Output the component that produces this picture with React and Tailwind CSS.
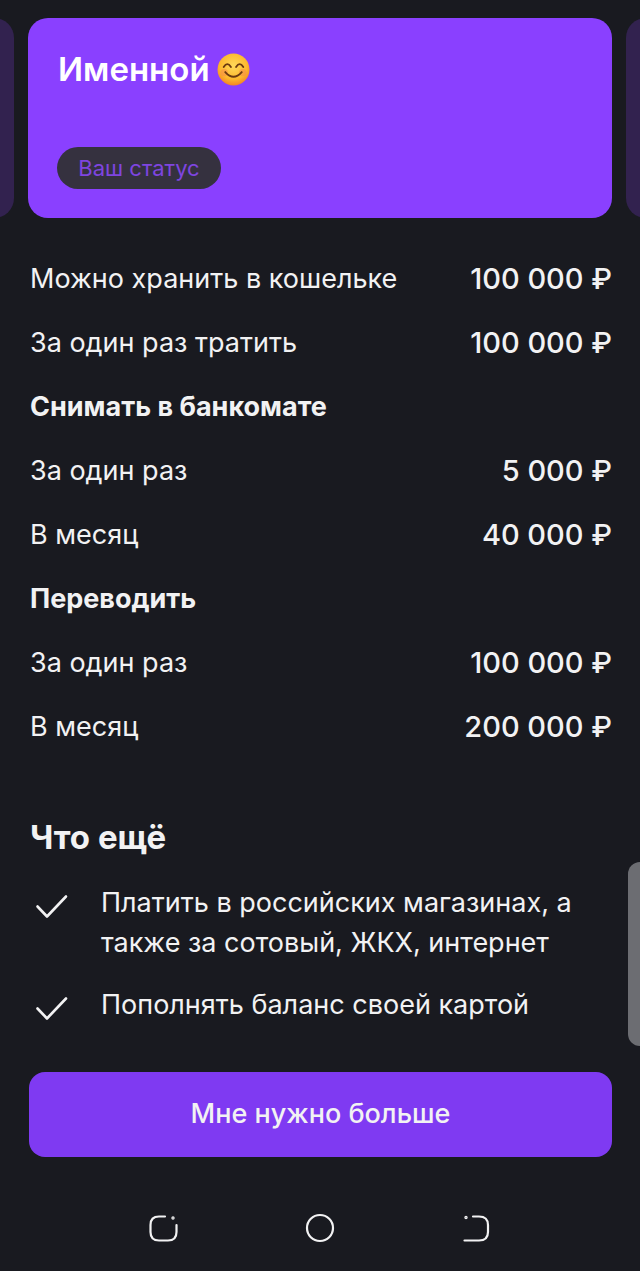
import React from 'react';

const limits = [
    { label: 'Можно хранить в кошельке', value: '100 000 ₽' },
    { label: 'За один раз тратить', value: '100 000 ₽' },
    { label: 'Снимать в банкомате', heading: true },
    { label: 'За один раз', value: '5 000 ₽' },
    { label: 'В месяц', value: '40 000 ₽' },
    { label: 'Переводить', heading: true },
    { label: 'За один раз', value: '100 000 ₽' },
    { label: 'В месяц', value: '200 000 ₽' },
];

const Check = () => (
    <svg width="34" height="26" viewBox="0 0 34 26" fill="none" className="shrink-0">
        <path d="M2.5 13.5 L12 23.5 L31 3.5" stroke="#f2f2f3" strokeWidth="2.6" strokeLinecap="round" strokeLinejoin="round" />
    </svg>
);

const Smile = () => (
    <svg width="33" height="33" viewBox="0 0 32 32">
        <defs>
            <radialGradient id="face" cx="50%" cy="38%" r="65%">
                <stop offset="0%" stopColor="#ffd95a" />
                <stop offset="65%" stopColor="#fdb92e" />
                <stop offset="100%" stopColor="#f27c22" />
            </radialGradient>
        </defs>
        <circle cx="16" cy="16" r="15.5" fill="url(#face)" />
        <circle cx="7" cy="19" r="3.6" fill="#f58a4b" opacity="0.55" />
        <circle cx="25" cy="19" r="3.6" fill="#f58a4b" opacity="0.55" />
        <path d="M6.5 13.5 Q10 8 13.5 13.5 M18.5 13.5 Q22 8 25.5 13.5" stroke="#6b3a10" strokeWidth="1.8" fill="none" strokeLinecap="round" />
        <path d="M8 18.5 Q16 27.5 24 18.5" stroke="#6b3a10" strokeWidth="1.8" fill="none" strokeLinecap="round" />
    </svg>
);

export default function App() {
    return (
        <div className="relative w-[640px] h-[1271px] overflow-hidden bg-[#191a20] text-[#f2f2f3] font-['Inter','Noto_Sans',sans-serif]">
            {/* Status cards */}
            <div className="flex gap-[14px] pt-[18px] ml-[-570px] w-max">
                <div className="w-[584px] h-[200px] rounded-[20px] bg-[#32224f]" />
                <div className="w-[584px] h-[200px] rounded-[20px] bg-[#8a40ff] pl-[29px] pt-[29px] flex flex-col">
                    <div className="flex items-center gap-[7px] h-[44px] ml-[1px]">
                        <span className="text-[33px] font-semibold text-white leading-none">Именной</span>
                        <Smile />
                    </div>
                    <span className="mt-[56px] w-[164px] h-[42px] rounded-full bg-[#35313f] flex items-center justify-center text-[22px] text-[#7f45e0]">Ваш статус</span>
                </div>
                <div className="w-[584px] h-[200px] rounded-[20px] bg-[#32224f]" />
            </div>

            {/* Limits */}
            <div className="mt-[29px] pl-[30px] pr-[28px] flex flex-col">
                {limits.map((row, i) => (
                    <div key={i} className="h-[64px] flex items-center justify-between">
                        <span className={row.heading ? 'text-[27px] font-bold' : 'text-[27px]'}>{row.label}</span>
                        {row.value && <span className="text-[29px] font-medium">{row.value}</span>}
                    </div>
                ))}
            </div>

            {/* What else */}
            <h2 className="mt-[56px] pl-[30px] text-[33px] font-bold leading-[44px]">Что ещё</h2>
            <div className="mt-[24px] pl-[35px] flex flex-col gap-[22px]">
                <div className="flex gap-[32px]">
                    <div className="pt-[10px]"><Check /></div>
                    <p className="text-[27px] leading-[40px] w-[500px]">Платить в российских магазинах, а также за сотовый, ЖКХ, интернет</p>
                </div>
                <div className="flex gap-[32px]">
                    <div className="pt-[10px]"><Check /></div>
                    <p className="text-[27px] leading-[40px]">Пополнять баланс своей картой</p>
                </div>
            </div>

            <div className="ml-[29px] mr-[28px] mt-[47px] h-[85px] rounded-[16px] bg-[#7f3af2] flex items-center justify-center text-[27px] font-medium">
                Мне нужно больше
            </div>

            {/* Android nav bar */}
            <div className="mt-[49px] h-[44px] px-[148px] flex items-center justify-between">
                <svg width="30" height="30" viewBox="0 0 30 30" fill="none" stroke="#f2f2f3" strokeWidth="2.2" strokeLinecap="round">
                    <path d="M17 3.5 H11 Q2.5 3.5 2.5 12 V19 Q2.5 27.5 11 27.5 H20 Q28.5 27.5 28.5 19 V12" />
                    <circle cx="25" cy="5" r="0.6" fill="#f2f2f3" />
                </svg>
                <svg width="30" height="30" viewBox="0 0 30 30" fill="none" stroke="#f2f2f3" strokeWidth="2.2">
                    <circle cx="15" cy="15" r="13" />
                </svg>
                <svg width="30" height="30" viewBox="0 0 30 30" fill="none" stroke="#f2f2f3" strokeWidth="2.2" strokeLinecap="round">
                    <path d="M11 3.5 H17 Q26 3.5 26 12 V19 Q26 27.5 17 27.5 H2.5" />
                    <circle cx="4" cy="4.5" r="0.6" fill="#f2f2f3" />
                </svg>
            </div>

            {/* Edge panel handle */}
            <div className="absolute right-0 top-[862px] w-[12px] h-[184px] rounded-l-[12px] bg-[#6c6d72]" />
        </div>
    );
}
